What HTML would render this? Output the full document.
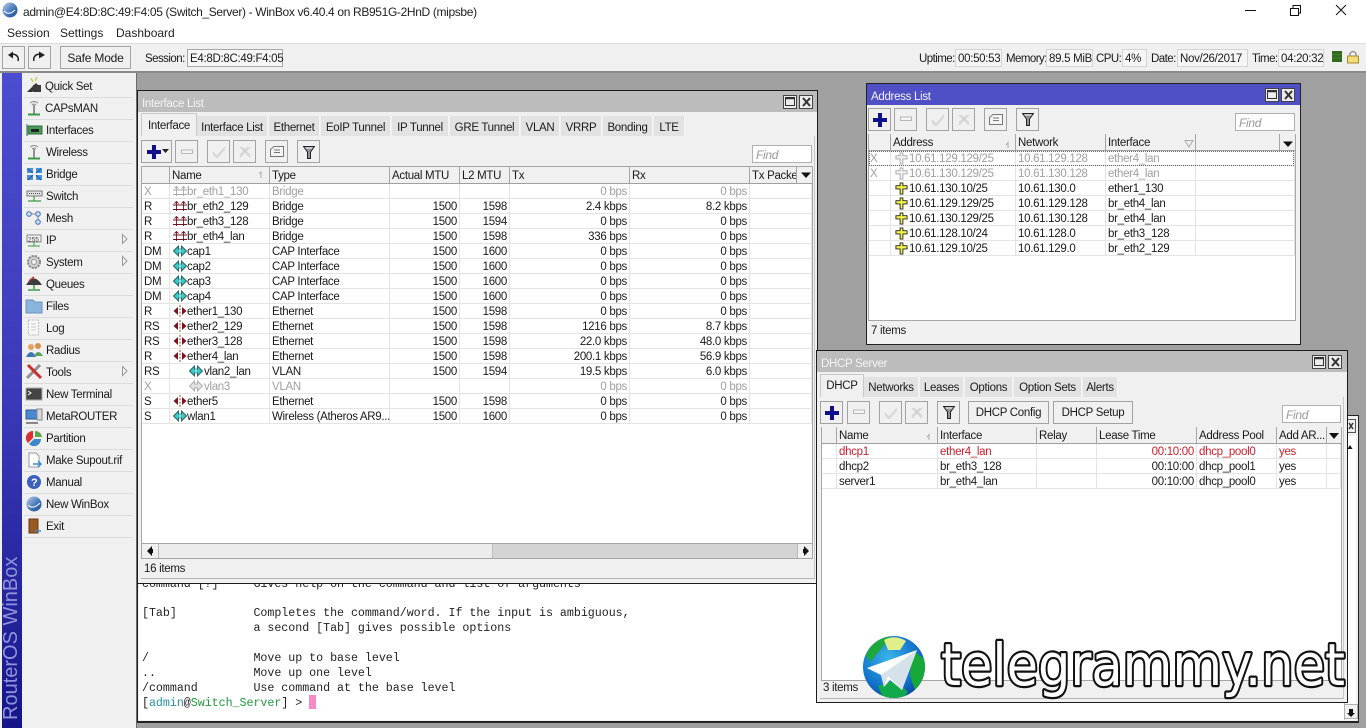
<!DOCTYPE html>
<html><head><meta charset="utf-8"><title>WinBox</title>
<style>
html,body{margin:0;padding:0}
body{width:1366px;height:728px;overflow:hidden;position:relative;background:#a0a0a0;font:11.5px/14px "Liberation Sans",sans-serif;letter-spacing:-.3px;color:#1a1a1a}
.b{position:absolute;box-sizing:border-box}
.x{position:absolute;white-space:pre;line-height:14px}
.l{letter-spacing:-.55px}
.btn{position:absolute;box-sizing:border-box;height:23px;width:23px;background:#f0f0f0;border:1px solid #a2a2a2;text-align:center;line-height:23px}
.fld{position:absolute;box-sizing:border-box;height:18px;background:#fff;border:1px solid #b0b0b0;padding:0 3px;line-height:18px;color:#999;font-style:italic;font-size:12px}
.sf{position:absolute;box-sizing:border-box;height:18px;top:49px;background:#f6f6f6;border:1px solid #d4d4d4;padding:0 2px;line-height:18px;white-space:pre}
.tab{position:absolute;box-sizing:border-box;background:#e2e2e2;border-right:1px solid #f4f4f4;text-align:center;line-height:22px;height:20px;white-space:pre}
.on{background:#f0f0f0;border:1px solid #c8c8c8;border-bottom:0;line-height:23px;height:23px}
.t1{line-height:24px}
.on.t1{line-height:25px}
.win{position:absolute;box-sizing:border-box;background:#f0f0f0;border:1px solid #1c1c1c}
.cap{position:absolute;left:0;right:0;top:0;height:21px;line-height:27px;padding-left:4px;color:#f4f4f4;font-size:11.5px}
.wb{position:absolute;box-sizing:border-box;width:14px;height:14px;border:1px solid #444;background:#ececec;top:4px}
table{position:absolute;border-collapse:separate;border-spacing:0;table-layout:fixed;background:#fff}
th,td{box-sizing:border-box;font-weight:normal;text-align:left;padding:0 2px;overflow:visible;white-space:nowrap;height:15px;vertical-align:top;border-right:1px solid #e4e4e4;border-bottom:1px solid #e4e4e4}
td{padding-top:2px;line-height:12px}
th{height:17px;padding-top:2px;background:#f0f0f0;border-right:1px solid #a6a6a6;border-bottom:1px solid #a0a0a0;border-top:0;line-height:14px}
.h th{padding-top:3px;line-height:13px}
td.r{text-align:right}
td.i{padding-left:17px}
td.v{padding-left:34px}
.ad td.i{padding-left:18px}
.g td{color:#a0a0a0}
.red td{color:#c8202c}
.tbx{position:absolute;box-sizing:border-box;background:#fff;border:1px solid #a6a6a6}
.m{position:absolute;left:142px;white-space:pre;font:11.65px/15px "Liberation Mono",monospace;letter-spacing:-.02px;color:#222}
.sl{position:absolute;left:24px;width:109px;height:1px;background:#dcdcdc}
</style></head>
<body>

<!-- title -->
<div class="b" style="left:0;top:0;width:1366px;height:43px;background:#fff"></div>
<div class="x" style="left:23px;top:5px;font-size:12px;letter-spacing:-.35px;color:#222">admin@E4:8D:8C:49:F4:05 (Switch_Server) - WinBox v6.40.4 on RB951G-2HnD (mipsbe)</div>
<div class="x" style="left:7px;top:26px;font-size:12px;letter-spacing:0;color:#222">Session</div>
<div class="x" style="left:60px;top:26px;font-size:12px;letter-spacing:0;color:#222">Settings</div>
<div class="x" style="left:116px;top:26px;font-size:12px;letter-spacing:0;color:#222">Dashboard</div>

<!-- toolbar -->
<div class="b" style="left:0;top:43px;width:1366px;height:30px;background:#f0f0f0;border-top:1px solid #dcdcdc;border-bottom:2px solid #8a8a8a"></div>
<div class="btn" style="left:2px;top:46px;width:23px"></div>
<div class="btn" style="left:28px;top:46px;width:23px"></div>
<div class="btn" style="left:60px;top:46px;width:71px;font-size:12px;letter-spacing:-.2px">Safe Mode</div>
<div class="x l" style="left:145px;top:52px">Session:</div>
<div class="sf" style="left:187px;width:96px;border-color:#a8a8a8">E4:8D:8C:49:F4:05</div>
<div class="x l" style="left:919px;top:52px">Uptime:</div><div class="sf" style="left:955px;width:47px">00:50:53</div>
<div class="x l" style="left:1006px;top:52px">Memory:</div><div class="sf" style="left:1046px;width:47px">89.5 MiB</div>
<div class="x l" style="left:1096px;top:52px">CPU:</div><div class="sf" style="left:1122px;width:25px">4%</div>
<div class="x l" style="left:1151px;top:52px">Date:</div><div class="sf" style="left:1177px;width:71px">Nov/26/2017</div>
<div class="x l" style="left:1252px;top:52px">Time:</div><div class="sf" style="left:1278px;width:46px">04:20:32</div>

<!-- blue strip + sidebar -->
<div class="b" style="left:0;top:73px;width:2px;height:655px;background:#eee"></div>
<div class="b" style="left:2px;top:73px;width:20px;height:655px;background:linear-gradient(#4c4cd0,#3a3ab8 50%,#16168a)"></div>
<div class="x" style="left:-79px;top:619px;width:180px;height:22px;line-height:22px;font-size:20px;letter-spacing:0;color:#9094dc;transform:rotate(-90deg)">RouterOS WinBox</div>
<div class="b" style="left:22px;top:73px;width:114px;height:655px;background:#f0f0f0"></div>
<div class="b" style="left:136px;top:73px;width:1px;height:655px;background:#6a6a6a"></div>
<div class="sl" style="top:97px"></div><div class="sl" style="top:119px"></div><div class="sl" style="top:141px"></div><div class="sl" style="top:163px"></div><div class="sl" style="top:185px"></div><div class="sl" style="top:207px"></div><div class="sl" style="top:229px"></div><div class="sl" style="top:251px"></div><div class="sl" style="top:273px"></div><div class="sl" style="top:295px"></div><div class="sl" style="top:317px"></div><div class="sl" style="top:339px"></div><div class="sl" style="top:361px"></div><div class="sl" style="top:383px"></div><div class="sl" style="top:405px"></div><div class="sl" style="top:427px"></div><div class="sl" style="top:449px"></div><div class="sl" style="top:471px"></div><div class="sl" style="top:493px"></div><div class="sl" style="top:515px"></div><div class="sl" style="top:537px"></div>
<div class="x" style="left:45px;top:80px">Quick Set</div>
<div class="x" style="left:45px;top:102px">CAPsMAN</div>
<div class="x" style="left:46px;top:124px">Interfaces</div>
<div class="x" style="left:46px;top:146px">Wireless</div>
<div class="x" style="left:46px;top:168px">Bridge</div>
<div class="x" style="left:46px;top:190px">Switch</div>
<div class="x" style="left:46px;top:212px">Mesh</div>
<div class="x" style="left:46px;top:234px">IP</div>
<div class="x" style="left:46px;top:256px">System</div>
<div class="x" style="left:46px;top:278px">Queues</div>
<div class="x" style="left:46px;top:300px">Files</div>
<div class="x" style="left:46px;top:322px">Log</div>
<div class="x" style="left:46px;top:344px">Radius</div>
<div class="x" style="left:46px;top:366px">Tools</div>
<div class="x" style="left:46px;top:388px">New Terminal</div>
<div class="x" style="left:46px;top:410px">MetaROUTER</div>
<div class="x" style="left:46px;top:432px">Partition</div>
<div class="x" style="left:46px;top:454px">Make Supout.rif</div>
<div class="x" style="left:46px;top:476px">Manual</div>
<div class="x" style="left:46px;top:498px">New WinBox</div>
<div class="x" style="left:46px;top:520px">Exit</div>

<!-- terminal -->
<div class="b" style="left:137px;top:415px;width:1222px;height:308px;background:#f0f0f0;border:1px solid #222;border-bottom:2px solid #222"></div>
<div class="b" style="left:139px;top:440px;width:1205px;height:280px;background:#fff"></div>
<div class="b" style="left:1344px;top:436px;width:12px;height:284px;background:#fff;border-left:1px solid #bbb"></div>
<div class="b" style="left:1344px;top:704px;width:14px;height:15px;background:#f0f0f0;border:1px solid #b0b0b0"></div>
<div class="b" style="left:1347px;top:419px;width:9px;height:14px;background:#ececec;border:1px solid #555"></div>
<div class="m" style="top:577px">command [?]     Gives help on the command and list of arguments</div>
<div class="m" style="top:606px">[Tab]           Completes the command/word. If the input is ambiguous,</div>
<div class="m" style="top:621px">                a second [Tab] gives possible options</div>
<div class="m" style="top:651px">/               Move up to base level</div>
<div class="m" style="top:666px">..              Move up one level</div>
<div class="m" style="top:681px">/command        Use command at the base level</div>
<div class="m" style="top:696px">[<span style="color:#2a8fa0">admin</span>@<span style="color:#21993c">Switch_Server</span>] &gt; </div>
<div class="b" style="left:309px;top:695px;width:7px;height:14px;background:#f48ac6"></div>

<!-- interface list -->
<div class="win" style="left:137px;top:90px;width:681px;height:494px">
 <div class="cap" style="background:#bcbcbc">Interface List</div>
 <div class="wb" style="left:645px"></div><div class="wb" style="left:661px"></div>
</div>
<div class="b" style="left:141px;top:136px;width:674px;height:443px;border-right:1px solid #c8c8c8;border-bottom:1px solid #b4b4b4"></div>
<div class="tab on t1" style="left:141px;top:113px;width:56px">Interface</div>
<div class="tab t1" style="left:197px;top:116px;width:71px">Interface List</div>
<div class="tab t1" style="left:269px;top:116px;width:51px">Ethernet</div>
<div class="tab t1" style="left:321px;top:116px;width:70px">EoIP Tunnel</div>
<div class="tab t1" style="left:392px;top:116px;width:57px">IP Tunnel</div>
<div class="tab t1" style="left:450px;top:116px;width:70px">GRE Tunnel</div>
<div class="tab t1" style="left:521px;top:116px;width:39px">VLAN</div>
<div class="tab t1" style="left:561px;top:116px;width:41px">VRRP</div>
<div class="tab t1" style="left:603px;top:116px;width:50px">Bonding</div>
<div class="tab t1" style="left:654px;top:116px;width:31px">LTE</div>
<div class="btn" style="left:141px;top:140px;width:31px"></div>
<div class="btn" style="left:175px;top:140px"></div>
<div class="btn" style="left:207px;top:140px"></div>
<div class="btn" style="left:233px;top:140px"></div>
<div class="btn" style="left:265px;top:140px"></div>
<div class="btn" style="left:297px;top:140px"></div>
<div class="fld" style="left:752px;top:145px;width:60px">Find</div>
<div class="tbx" style="left:141px;top:166px;width:672px;height:378px"></div>
<table style="left:142px;top:167px;width:670px">
<colgroup><col style="width:28px"><col style="width:100px"><col style="width:120px"><col style="width:70px"><col style="width:50px"><col style="width:120px"><col style="width:120px"><col style="width:62px"></colgroup>
<tr><th></th><th>Name</th><th>Type</th><th>Actual MTU</th><th>L2 MTU</th><th>Tx</th><th>Rx</th><th style="border-right:0">Tx Packe</th></tr>
<tr class="g"><td>X</td><td class="i">br_eth1_130</td><td>Bridge</td><td></td><td></td><td class="r">0 bps</td><td class="r">0 bps</td><td></td></tr>
<tr><td>R</td><td class="i">br_eth2_129</td><td>Bridge</td><td class="r">1500</td><td class="r">1598</td><td class="r">2.4 kbps</td><td class="r">8.2 kbps</td><td></td></tr>
<tr><td>R</td><td class="i">br_eth3_128</td><td>Bridge</td><td class="r">1500</td><td class="r">1594</td><td class="r">0 bps</td><td class="r">0 bps</td><td></td></tr>
<tr><td>R</td><td class="i">br_eth4_lan</td><td>Bridge</td><td class="r">1500</td><td class="r">1598</td><td class="r">336 bps</td><td class="r">0 bps</td><td></td></tr>
<tr><td>DM</td><td class="i">cap1</td><td>CAP Interface</td><td class="r">1500</td><td class="r">1600</td><td class="r">0 bps</td><td class="r">0 bps</td><td></td></tr>
<tr><td>DM</td><td class="i">cap2</td><td>CAP Interface</td><td class="r">1500</td><td class="r">1600</td><td class="r">0 bps</td><td class="r">0 bps</td><td></td></tr>
<tr><td>DM</td><td class="i">cap3</td><td>CAP Interface</td><td class="r">1500</td><td class="r">1600</td><td class="r">0 bps</td><td class="r">0 bps</td><td></td></tr>
<tr><td>DM</td><td class="i">cap4</td><td>CAP Interface</td><td class="r">1500</td><td class="r">1600</td><td class="r">0 bps</td><td class="r">0 bps</td><td></td></tr>
<tr><td>R</td><td class="i">ether1_130</td><td>Ethernet</td><td class="r">1500</td><td class="r">1598</td><td class="r">0 bps</td><td class="r">0 bps</td><td></td></tr>
<tr><td>RS</td><td class="i">ether2_129</td><td>Ethernet</td><td class="r">1500</td><td class="r">1598</td><td class="r">1216 bps</td><td class="r">8.7 kbps</td><td></td></tr>
<tr><td>RS</td><td class="i">ether3_128</td><td>Ethernet</td><td class="r">1500</td><td class="r">1598</td><td class="r">22.0 kbps</td><td class="r">48.0 kbps</td><td></td></tr>
<tr><td>R</td><td class="i">ether4_lan</td><td>Ethernet</td><td class="r">1500</td><td class="r">1598</td><td class="r">200.1 kbps</td><td class="r">56.9 kbps</td><td></td></tr>
<tr><td>RS</td><td class="v">vlan2_lan</td><td>VLAN</td><td class="r">1500</td><td class="r">1594</td><td class="r">19.5 kbps</td><td class="r">6.0 kbps</td><td></td></tr>
<tr class="g"><td>X</td><td class="v">vlan3</td><td>VLAN</td><td></td><td></td><td class="r">0 bps</td><td class="r">0 bps</td><td></td></tr>
<tr><td>S</td><td class="i">ether5</td><td>Ethernet</td><td class="r">1500</td><td class="r">1598</td><td class="r">0 bps</td><td class="r">0 bps</td><td></td></tr>
<tr><td>S</td><td class="i">wlan1</td><td>Wireless (Atheros AR9...</td><td class="r">1500</td><td class="r">1600</td><td class="r">0 bps</td><td class="r">0 bps</td><td></td></tr>
</table>
<div class="b" style="left:796px;top:167px;width:16px;height:17px;background:#f0f0f0;border-left:1px solid #a6a6a6;border-bottom:1px solid #a0a0a0"></div>
<div class="b" style="left:141px;top:543px;width:672px;height:16px;background:#d4d4d4;border:1px solid #a6a6a6"></div>
<div class="b" style="left:142px;top:544px;width:16px;height:14px;background:#f0f0f0"></div>
<div class="b" style="left:158px;top:544px;width:335px;height:14px;background:#ececec;border-left:1px solid #bbb;border-right:1px solid #bbb"></div>
<div class="b" style="left:797px;top:544px;width:15px;height:14px;background:#f0f0f0;border-left:1px solid #bbb"></div>
<div class="x" style="left:144px;top:562px">16 items</div>

<!-- address list -->
<div class="win" style="left:866px;top:83px;width:435px;height:262px;border-color:#222">
 <div class="cap" style="background:#4f50c6">Address List</div>
 <div class="wb" style="left:398px"></div><div class="wb" style="left:414px"></div>
</div>
<div class="btn" style="left:868px;top:108px"></div>
<div class="btn" style="left:894px;top:108px"></div>
<div class="btn" style="left:926px;top:108px"></div>
<div class="btn" style="left:952px;top:108px"></div>
<div class="btn" style="left:984px;top:108px"></div>
<div class="btn" style="left:1016px;top:108px"></div>
<div class="fld" style="left:1235px;top:113px;width:60px">Find</div>
<div class="tbx" style="left:868px;top:134px;width:428px;height:187px"></div>
<table class="ad h" style="left:869px;top:134px;width:426px">
<colgroup><col style="width:22px"><col style="width:125px"><col style="width:90px"><col style="width:90px"><col style="width:99px"></colgroup>
<tr><th></th><th>Address</th><th>Network</th><th>Interface</th><th style="border-right:0"></th></tr>
<tr class="g"><td style="padding-left:1px">X</td><td class="i">10.61.129.129/25</td><td>10.61.129.128</td><td>ether4_lan</td><td></td></tr>
<tr class="g"><td style="padding-left:1px">X</td><td class="i">10.61.130.129/25</td><td>10.61.130.128</td><td>ether4_lan</td><td></td></tr>
<tr><td></td><td class="i">10.61.130.10/25</td><td>10.61.130.0</td><td>ether1_130</td><td></td></tr>
<tr><td></td><td class="i">10.61.129.129/25</td><td>10.61.129.128</td><td>br_eth4_lan</td><td></td></tr>
<tr><td></td><td class="i">10.61.130.129/25</td><td>10.61.130.128</td><td>br_eth4_lan</td><td></td></tr>
<tr><td></td><td class="i">10.61.128.10/24</td><td>10.61.128.0</td><td>br_eth3_128</td><td></td></tr>
<tr><td></td><td class="i">10.61.129.10/25</td><td>10.61.129.0</td><td>br_eth2_129</td><td></td></tr>
</table>
<div class="b" style="left:1279px;top:134px;width:16px;height:17px;background:#f0f0f0;border-left:1px solid #a6a6a6;border-bottom:1px solid #a0a0a0"></div>
<div class="b" style="left:869px;top:151px;width:425px;height:15px;border:1px dotted #666"></div>
<div class="x" style="left:871px;top:324px">7 items</div>

<!-- DHCP -->
<div class="win" style="left:816px;top:350px;width:532px;height:353px">
 <div class="cap" style="background:#bcbcbc">DHCP Server</div>
 <div class="wb" style="left:495px"></div><div class="wb" style="left:511px"></div>
</div>
<div class="b" style="left:820px;top:397px;width:524px;height:302px;border-right:1px solid #c8c8c8;border-bottom:1px solid #b4b4b4"></div>
<div class="tab on" style="left:820px;top:374px;width:44px">DHCP</div>
<div class="tab" style="left:864px;top:377px;width:55px">Networks</div>
<div class="tab" style="left:920px;top:377px;width:44px">Leases</div>
<div class="tab" style="left:965px;top:377px;width:48px">Options</div>
<div class="tab" style="left:1014px;top:377px;width:68px">Option Sets</div>
<div class="tab" style="left:1083px;top:377px;width:35px">Alerts</div>
<div class="btn" style="left:820px;top:401px"></div>
<div class="btn" style="left:847px;top:401px"></div>
<div class="btn" style="left:879px;top:401px"></div>
<div class="btn" style="left:905px;top:401px"></div>
<div class="btn" style="left:937px;top:401px"></div>
<div class="btn" style="left:968px;top:401px;width:81px">DHCP Config</div>
<div class="btn" style="left:1053px;top:401px;width:80px">DHCP Setup</div>
<div class="fld" style="left:1282px;top:405px;width:59px">Find</div>
<div class="tbx" style="left:821px;top:427px;width:521px;height:254px"></div>
<table class="h" style="left:822px;top:427px;width:519px">
<colgroup><col style="width:15px"><col style="width:101px"><col style="width:99px"><col style="width:60px"><col style="width:100px"><col style="width:80px"><col style="width:50px"><col style="width:14px"></colgroup>
<tr><th></th><th>Name</th><th>Interface</th><th>Relay</th><th>Lease Time</th><th>Address Pool</th><th>Add AR...</th><th style="border-right:0"></th></tr>
<tr class="red"><td></td><td>dhcp1</td><td>ether4_lan</td><td></td><td class="r">00:10:00</td><td>dhcp_pool0</td><td>yes</td><td></td></tr>
<tr><td></td><td>dhcp2</td><td>br_eth3_128</td><td></td><td class="r">00:10:00</td><td>dhcp_pool1</td><td>yes</td><td></td></tr>
<tr><td></td><td>server1</td><td>br_eth4_lan</td><td></td><td class="r">00:10:00</td><td>dhcp_pool0</td><td>yes</td><td></td></tr>
</table>
<div class="x" style="left:823px;top:681px">3 items</div>

<!-- icons overlay -->
<svg class="b" style="left:0;top:0" width="1366" height="728" viewBox="0 0 1366 728" xmlns="http://www.w3.org/2000/svg">
<defs>
<linearGradient id="gs" x1="0" y1="0" x2="1" y2="1"><stop offset="0" stop-color="#bcd0ea"/><stop offset=".6" stop-color="#3f72b8"/><stop offset="1" stop-color="#1c4a90"/></linearGradient>
<symbol id="br" viewBox="0 0 14 10" width="14" height="10"><path d="M0 4H14M0 8.500H14M3.500 1V10M10.500 1V10M1.500 2.500L3.500 .5 5.500 2.500M8.500 2.500L10.500 .5 12.500 2.500" fill="none" stroke="#6e1420" stroke-width=".9"/></symbol>
<symbol id="brg" viewBox="0 0 14 10" width="14" height="10"><path d="M0 4H14M0 8.500H14M3.500 1V10M10.500 1V10M1.500 2.500L3.500 .5 5.500 2.500M8.500 2.500L10.500 .5 12.500 2.500" fill="none" stroke="#aaa" stroke-width=".9"/></symbol>
<symbol id="cp" viewBox="0 0 14 12" width="14" height="12"><path d="M5.500 1L0.500 6 5.500 11V8H8.500V11L13.500 6 8.500 1V4H5.500Z" fill="#3cc8c4" stroke="#1f5c60" stroke-width=".9"/><path d="M7 0V12" stroke="#fff" stroke-width=".8"/></symbol>
<symbol id="cpg" viewBox="0 0 14 12" width="14" height="12"><path d="M5.500 1L0.500 6 5.500 11V8H8.500V11L13.500 6 8.500 1V4H5.500Z" fill="#e4e4e4" stroke="#aaa" stroke-width=".9"/></symbol>
<symbol id="et" viewBox="0 0 14 12" width="14" height="12"><path d="M5 2L.5 6 5 10ZM9 2L13.500 6 9 10Z" fill="#7e1024"/><path d="M7 0V12" stroke="#b0603a" stroke-width="1.200" stroke-dasharray="2 1.300"/></symbol>
<symbol id="ad" viewBox="0 0 14 13" width="13" height="13"><path d="M5.500 0.500H8.500V3.500H13V7H8.500V12.500H5.500V7H1V3.500H5.500Z" fill="#f2f24a" stroke="#222" stroke-width="1"/></symbol>
<symbol id="adg" viewBox="0 0 14 13" width="13" height="13"><path d="M5.500 0.500H8.500V3.500H13V7H8.500V12.500H5.500V7H1V3.500H5.500Z" fill="#f0f0f0" stroke="#aaa" stroke-width="1"/></symbol>
<symbol id="plus" viewBox="0 0 14 14" width="14" height="14"><path d="M5 0H9V5H14V9H9V14H5V9H0V5H5Z" fill="#10108c"/></symbol>
<symbol id="minus" viewBox="0 0 12 6" width="12" height="6"><rect x=".5" y="1" width="11" height="3.500" fill="#f4f4f4" stroke="#b8b8b8"/></symbol>
<symbol id="chk" viewBox="0 0 14 12" width="14" height="12"><path d="M1 6L5 10 13 1M1 8L5 12 13 3" fill="none" stroke="#cfcfcf" stroke-width=".9"/></symbol>
<symbol id="crs" viewBox="0 0 12 12" width="12" height="12"><path d="M1 1L11 11M11 1L1 11M3 1L11 9M9 1L1 9" fill="none" stroke="#cfcfcf" stroke-width="1"/></symbol>
<symbol id="note" viewBox="0 0 14 11" width="14" height="11"><path d="M.5 3.500L4 .5H13.500V10.500H.5ZM4 4H10M4 6.500H10" fill="#f4f4f4" stroke="#777" stroke-width="1"/></symbol>
<symbol id="flt" viewBox="0 0 12 13" width="12" height="13"><path d="M.5 .5H11.500L7.500 6V12.500H4.500V6Z" fill="#8f9296" stroke="#222" stroke-width="1"/><path d="M2.500 2H9.500" stroke="#fff"/></symbol>
<symbol id="ant" viewBox="0 0 16 16" width="16" height="16"><path d="M4 3Q8 0 12 3M6 5Q8 3 10 5" fill="none" stroke="#8a8a8a" stroke-width="1"/><path d="M8 5V14" stroke="#666" stroke-width="1.400"/><path d="M2 14.500H14" stroke="#3a9a46" stroke-width="2"/></symbol>
</defs>

<!-- icon: app -->
<circle cx="10" cy="10" r="7.500" fill="url(#gs)"/><path d="M4 11Q9 16 15 10" fill="none" stroke="#fff" stroke-width="1"/>
<!-- window controls -->
<path d="M1245 10.500H1256" stroke="#111"/><path d="M1290.500 8.500H1298.500V15.500H1290.500ZM1293 8V5.500H1300.500V13H1298.500" fill="none" stroke="#111"/><path d="M1336 5L1346 15M1346 5L1336 15" stroke="#111" fill="none"/>
<!-- undo redo -->
<path d="M18 61A5 5 0 0 0 12 54.500" fill="none" stroke="#222" stroke-width="1.500"/><path d="M8 55L13 51.500V58.500Z" fill="#222"/>
<path d="M34 61A5 5 0 0 1 40 54.500" fill="none" stroke="#222" stroke-width="1.500"/><path d="M45 55L39 51.500V58.500Z" fill="#222"/>
<!-- status -->
<rect x="1332" y="51" width="10" height="11" fill="#2f6a1e"/><path d="M1332 54.500H1342M1332 58H1342" stroke="#4f8a30" stroke-width=".7"/>
<rect x="1347.500" y="56" width="11" height="7" fill="#f2de72" stroke="#a88a30"/><path d="M1350 56V53.500Q1353 49.500 1356 53.500V56" fill="none" stroke="#888" stroke-width="1.300"/>

<!-- sidebar -->
<path d="M27 92L36 83 39 86 32 92Z" fill="#333"/><rect x="33" y="85" width="8" height="7" fill="#3a3a3a"/><path d="M31 78L33 82M37 77L35 81" stroke="#c8c84c" stroke-width="1.300"/>
<use href="#ant" x="26" y="100"/><use href="#ant" x="26" y="144"/>
<path d="M26 124H28V136H26Z" fill="#8aa"/><rect x="28" y="126" width="14" height="8" fill="#4a9a5a" stroke="#2a6a3a"/><path d="M31 129H39V132H31Z" fill="#222"/>
<path d="M27 168H33V173H27ZM36 168H42V173H36ZM27 175H33V180H27ZM36 175H42V180H36Z" fill="#4c90d8"/><path d="M28 169L33 173M41 169L36 173M28 180L33 175M41 180L36 175" stroke="#1c5aa0"/>
<rect x="27" y="191" width="15" height="5" fill="#e4e4e4" stroke="#777"/><path d="M29 193.500H40" stroke="#444" stroke-dasharray="1 1"/><path d="M34 196V201M28 201H41" stroke="#3a9a46" stroke-width="1.200"/>
<circle cx="29" cy="214" r="2.300" fill="#cfe0f4" stroke="#3a72b8"/><circle cx="38" cy="214" r="2.300" fill="#cfe0f4" stroke="#3a72b8"/><circle cx="38" cy="222" r="2.300" fill="#cfe0f4" stroke="#3a72b8"/><path d="M31 214H36M38 216V220" stroke="#888"/>
<rect x="27" y="235" width="14" height="7" fill="#f4f4f4" stroke="#888"/><text x="28" y="241.500" font-size="6.500" letter-spacing="0" fill="#444" font-family="Liberation Sans,sans-serif">255</text><path d="M34 242V246M28 246H40" stroke="#3a9a46"/>
<circle cx="34" cy="262" r="6" fill="#d0d0d0" stroke="#888" stroke-width="2" stroke-dasharray="2.200 1"/><circle cx="34" cy="262" r="2.500" fill="#f0f0f0" stroke="#999"/>
<path d="M26 285Q34 272 42 285Z" fill="#3c3c3c"/><path d="M29 281L34 277" stroke="#c03030" stroke-width="1.500"/><path d="M34 285V289M28 290H40" stroke="#3a9a46" stroke-width="1.500"/>
<path d="M26 300H33L35 302H42V313H26Z" fill="#8ab4dc" stroke="#6a94bc"/>
<rect x="28.500" y="320" width="10" height="15" fill="#f8f8f8" stroke="#bbb" stroke-dasharray="2 1"/><path d="M31 324H36M31 327H36M31 330H36" stroke="#ccc"/>
<circle cx="31" cy="347" r="3" fill="#e8a060"/><path d="M26 357Q31 347 36 357Z" fill="#3c78b8"/><circle cx="38" cy="346" r="3" fill="#d89050"/><path d="M34 356Q38 348 43 356Z" fill="#5aa060"/>
<path d="M27 378L40 365" stroke="#909090" stroke-width="3"/><path d="M28 365L41 378" stroke="#c83030" stroke-width="3"/>
<rect x="26" y="388" width="16" height="12" fill="#444" stroke="#aaa"/><path d="M28 391L31 393 28 395" stroke="#fff" fill="none"/>
<rect x="26" y="410" width="11" height="9" fill="#4a88d0" stroke="#2a5a9a"/><rect x="37" y="409" width="5" height="11" fill="#d8d8d8" stroke="#888"/><path d="M26 423H38" stroke="#888" stroke-width="2"/>
<path d="M33 431A7 7 0 0 0 28 443L33 438Z" fill="#d83030"/><path d="M35 431A7 7 0 0 1 42 437H35Z" fill="#58a848"/><path d="M29 444A7 7 0 0 0 41 439H34Z" fill="#3c88c8"/>
<path d="M29 453H36L39 456V467H29Z" fill="#fff" stroke="#99a"/><path d="M33 464H40M38 461L41 464 38 467" stroke="#3a88d0" stroke-width="1.400" fill="none"/>
<circle cx="34" cy="482" r="7" fill="#3c60c0"/><text x="31" y="486" font-size="11" font-weight="bold" fill="#fff" letter-spacing="0" font-family="Liberation Sans,sans-serif">?</text>
<circle cx="34" cy="504" r="7.500" fill="url(#gs)"/><path d="M28 505Q33 510 40 503" stroke="#fff" fill="none"/>
<rect x="29" y="519" width="9" height="14" fill="#9a5a24" stroke="#6a3a14"/><path d="M35 531H41" stroke="#3a88d0" stroke-width="1.500"/>
<path d="M122.500 234.500L127 239 122.500 243.500Z M122.500 256.500L127 261 122.500 265.500Z M122.500 366.500L127 371 122.500 375.500Z" fill="#f4f4f4" stroke="#999"/>

<!-- window buttons -->
<g fill="none" stroke="#333">
<rect x="785.500" y="97.500" width="9" height="8"/><path d="M785 98.500H795" stroke-width="1.500"/><path d="M803 98L810 106M810 98L803 106" stroke-width="2"/>
<rect x="1267.500" y="90.500" width="9" height="8"/><path d="M1267 91.500H1277" stroke-width="1.500"/><path d="M1285 91L1292 99M1292 91L1285 99" stroke-width="2"/>
<rect x="1314.500" y="357.500" width="9" height="8"/><path d="M1314 358.500H1324" stroke-width="1.500"/><path d="M1332 358L1339 366M1339 358L1332 366" stroke-width="2"/>
<path d="M1349 423L1353 429M1353 423L1349 429" stroke-width="1.500"/>
</g>
<path d="M1350 445L1347.500 449H1352.500Z" fill="#111"/>

<!-- interface toolbar -->
<use href="#plus" x="147" y="145"/><path d="M162 149H169L165.500 153Z" fill="#222"/>
<use href="#minus" x="181" y="149"/><use href="#chk" x="212" y="146"/><use href="#crs" x="239" y="146"/><use href="#note" x="270" y="146"/><use href="#flt" x="303" y="146"/>
<path d="M801 172.500H811L806 178Z" fill="#111"/>
<path d="M259 173.500L261 172V178" stroke="#aaa" fill="none"/>
<use href="#brg" x="173" y="186"/><use href="#br" x="173" y="201"/><use href="#br" x="173" y="216"/><use href="#br" x="173" y="231"/>
<use href="#cp" x="173" y="245"/><use href="#cp" x="173" y="260"/><use href="#cp" x="173" y="275"/><use href="#cp" x="173" y="290"/>
<use href="#et" x="173" y="305"/><use href="#et" x="173" y="320"/><use href="#et" x="173" y="335"/><use href="#et" x="173" y="350"/>
<use href="#cp" x="189" y="365"/><use href="#cpg" x="189" y="380"/><use href="#et" x="173" y="395"/><use href="#cp" x="173" y="410"/>
<path d="M147 551L152 546V556Z M809 551L804 546V556Z" fill="#111"/><path d="M152 549H153V553H152ZM803 549H804V553H803Z" fill="#111"/>

<!-- address toolbar -->
<use href="#plus" x="873" y="113"/><use href="#minus" x="900" y="116"/><use href="#chk" x="931" y="114"/><use href="#crs" x="958" y="114"/><use href="#note" x="989" y="114"/><use href="#flt" x="1022" y="113"/>
<path d="M1283 141.500H1293L1288 147Z" fill="#111"/>
<path d="M1006 145L1008 142.500V148" stroke="#aaa" fill="none"/><path d="M1185 140.500H1193L1189 147Z" fill="none" stroke="#aaa"/>
<use href="#adg" x="895" y="152"/><use href="#adg" x="895" y="167"/><use href="#ad" x="895" y="182"/><use href="#ad" x="895" y="197"/><use href="#ad" x="895" y="212"/><use href="#ad" x="895" y="227"/><use href="#ad" x="895" y="242"/>

<!-- dhcp toolbar -->
<use href="#plus" x="825" y="406"/><use href="#minus" x="853" y="409"/><use href="#chk" x="884" y="407"/><use href="#crs" x="911" y="407"/><use href="#flt" x="943" y="406"/>
<path d="M1329 433H1339L1334 439Z" fill="#111"/><path d="M927 437L929 434.500V440" stroke="#aaa" fill="none"/>
<path d="M1349 709H1353V713H1355L1351 717 1347 713H1349Z" fill="#111"/>

<!-- watermark -->
<defs><clipPath id="gl"><circle cx="894" cy="667" r="31"/></clipPath>
<radialGradient id="oc" cx=".4" cy=".35" r=".75"><stop offset="0" stop-color="#38b4ea"/><stop offset=".65" stop-color="#1270c8"/><stop offset="1" stop-color="#0a3c96"/></radialGradient></defs>
<circle cx="894" cy="667" r="31" fill="url(#oc)"/>
<g clip-path="url(#gl)">
<path d="M866 655Q872 640 890 636L882 648 870 662Z" fill="#1ea83c"/>
<path d="M884 640Q895 634 906 641L900 650 888 650Z" fill="#dff08a"/>
<path d="M912 650L926 660 925 682 915 690 910 676Z" fill="#18a83a"/>
<path d="M878 686L895 680 908 692 902 700 884 700Z" fill="#12a84c"/>
</g>
<path d="M917 650L867 668 881 675 884 687 890 680 902 690Z" fill="#fff"/>
<path d="M917 650L881 675 884 687 888 676 902 690Z" fill="#d6e2ea"/>
<text x="941" y="685" font-family="DejaVu Sans,sans-serif" font-size="58" fill="#fff" stroke="#111" stroke-width="4.500" textLength="404" lengthAdjust="spacingAndGlyphs" letter-spacing="0" style="paint-order:stroke;stroke-linejoin:round">telegrammy.net</text>
</svg>
</body></html>
